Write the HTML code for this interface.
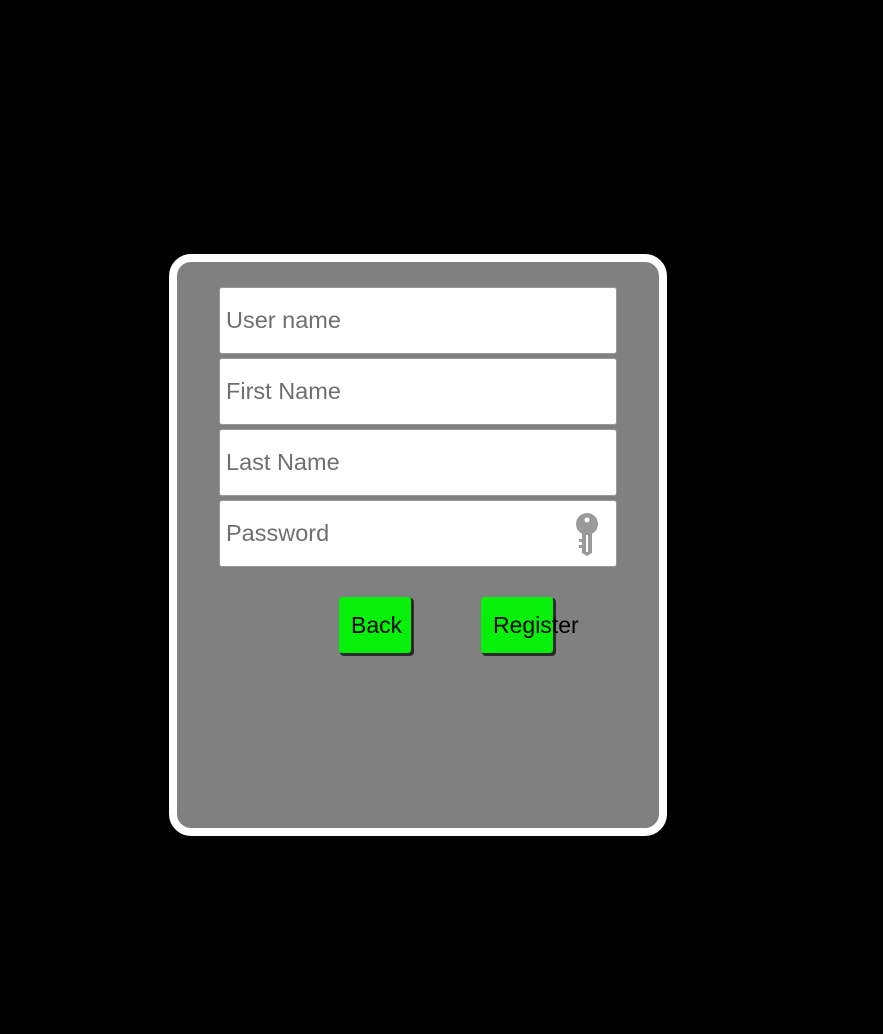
<!DOCTYPE html>
<html><head><style>
body{margin:0;background:#000;width:883px;height:1034px;position:relative;font-family:"Liberation Sans",sans-serif;}
.card{position:absolute;left:169px;top:254px;width:482px;height:566px;background:#808080;border:8px solid #fff;border-radius:22px;}
.in{position:absolute;left:219px;width:396px;height:65px;background:#fff;border:1px solid #999;border-radius:3px;}
.in span{position:absolute;left:6px;top:19px;font-size:23.5px;color:#6f6f6f;}
.btn{position:absolute;top:597px;width:72px;height:56px;background:#06f00a;border-radius:3px;box-shadow:2px 2px 0 1px #2a2a2a;font-size:23px;color:#000;}
.btn span{position:absolute;top:15px;white-space:nowrap;}
</style></head><body>
<div class="card"></div>
<div class="in" style="top:287px"><span>User name</span></div>
<div class="in" style="top:358px"><span>First Name</span></div>
<div class="in" style="top:429px"><span>Last Name</span></div>
<div class="in" style="top:500px"><span>Password</span>
<svg style="position:absolute;left:355px;top:12px" width="24" height="44" viewBox="0 0 24 44">
<circle cx="12" cy="11" r="11" fill="#9a9a9a"/><circle cx="12" cy="7" r="2.5" fill="#fff"/>
<path d="M7 18h10v22l-5 3-5-3z" fill="#9a9a9a"/>
<path d="M4 26h4v3H4zM4 32h4v3H4z" fill="#9a9a9a"/>
<rect x="11" y="22" width="2" height="17" fill="#fff"/>
</svg></div>
<div class="btn" style="left:339px"><span style="left:12px">Back</span></div>
<div class="btn" style="left:481px"><span style="left:12px">Register</span></div>
</body></html>
